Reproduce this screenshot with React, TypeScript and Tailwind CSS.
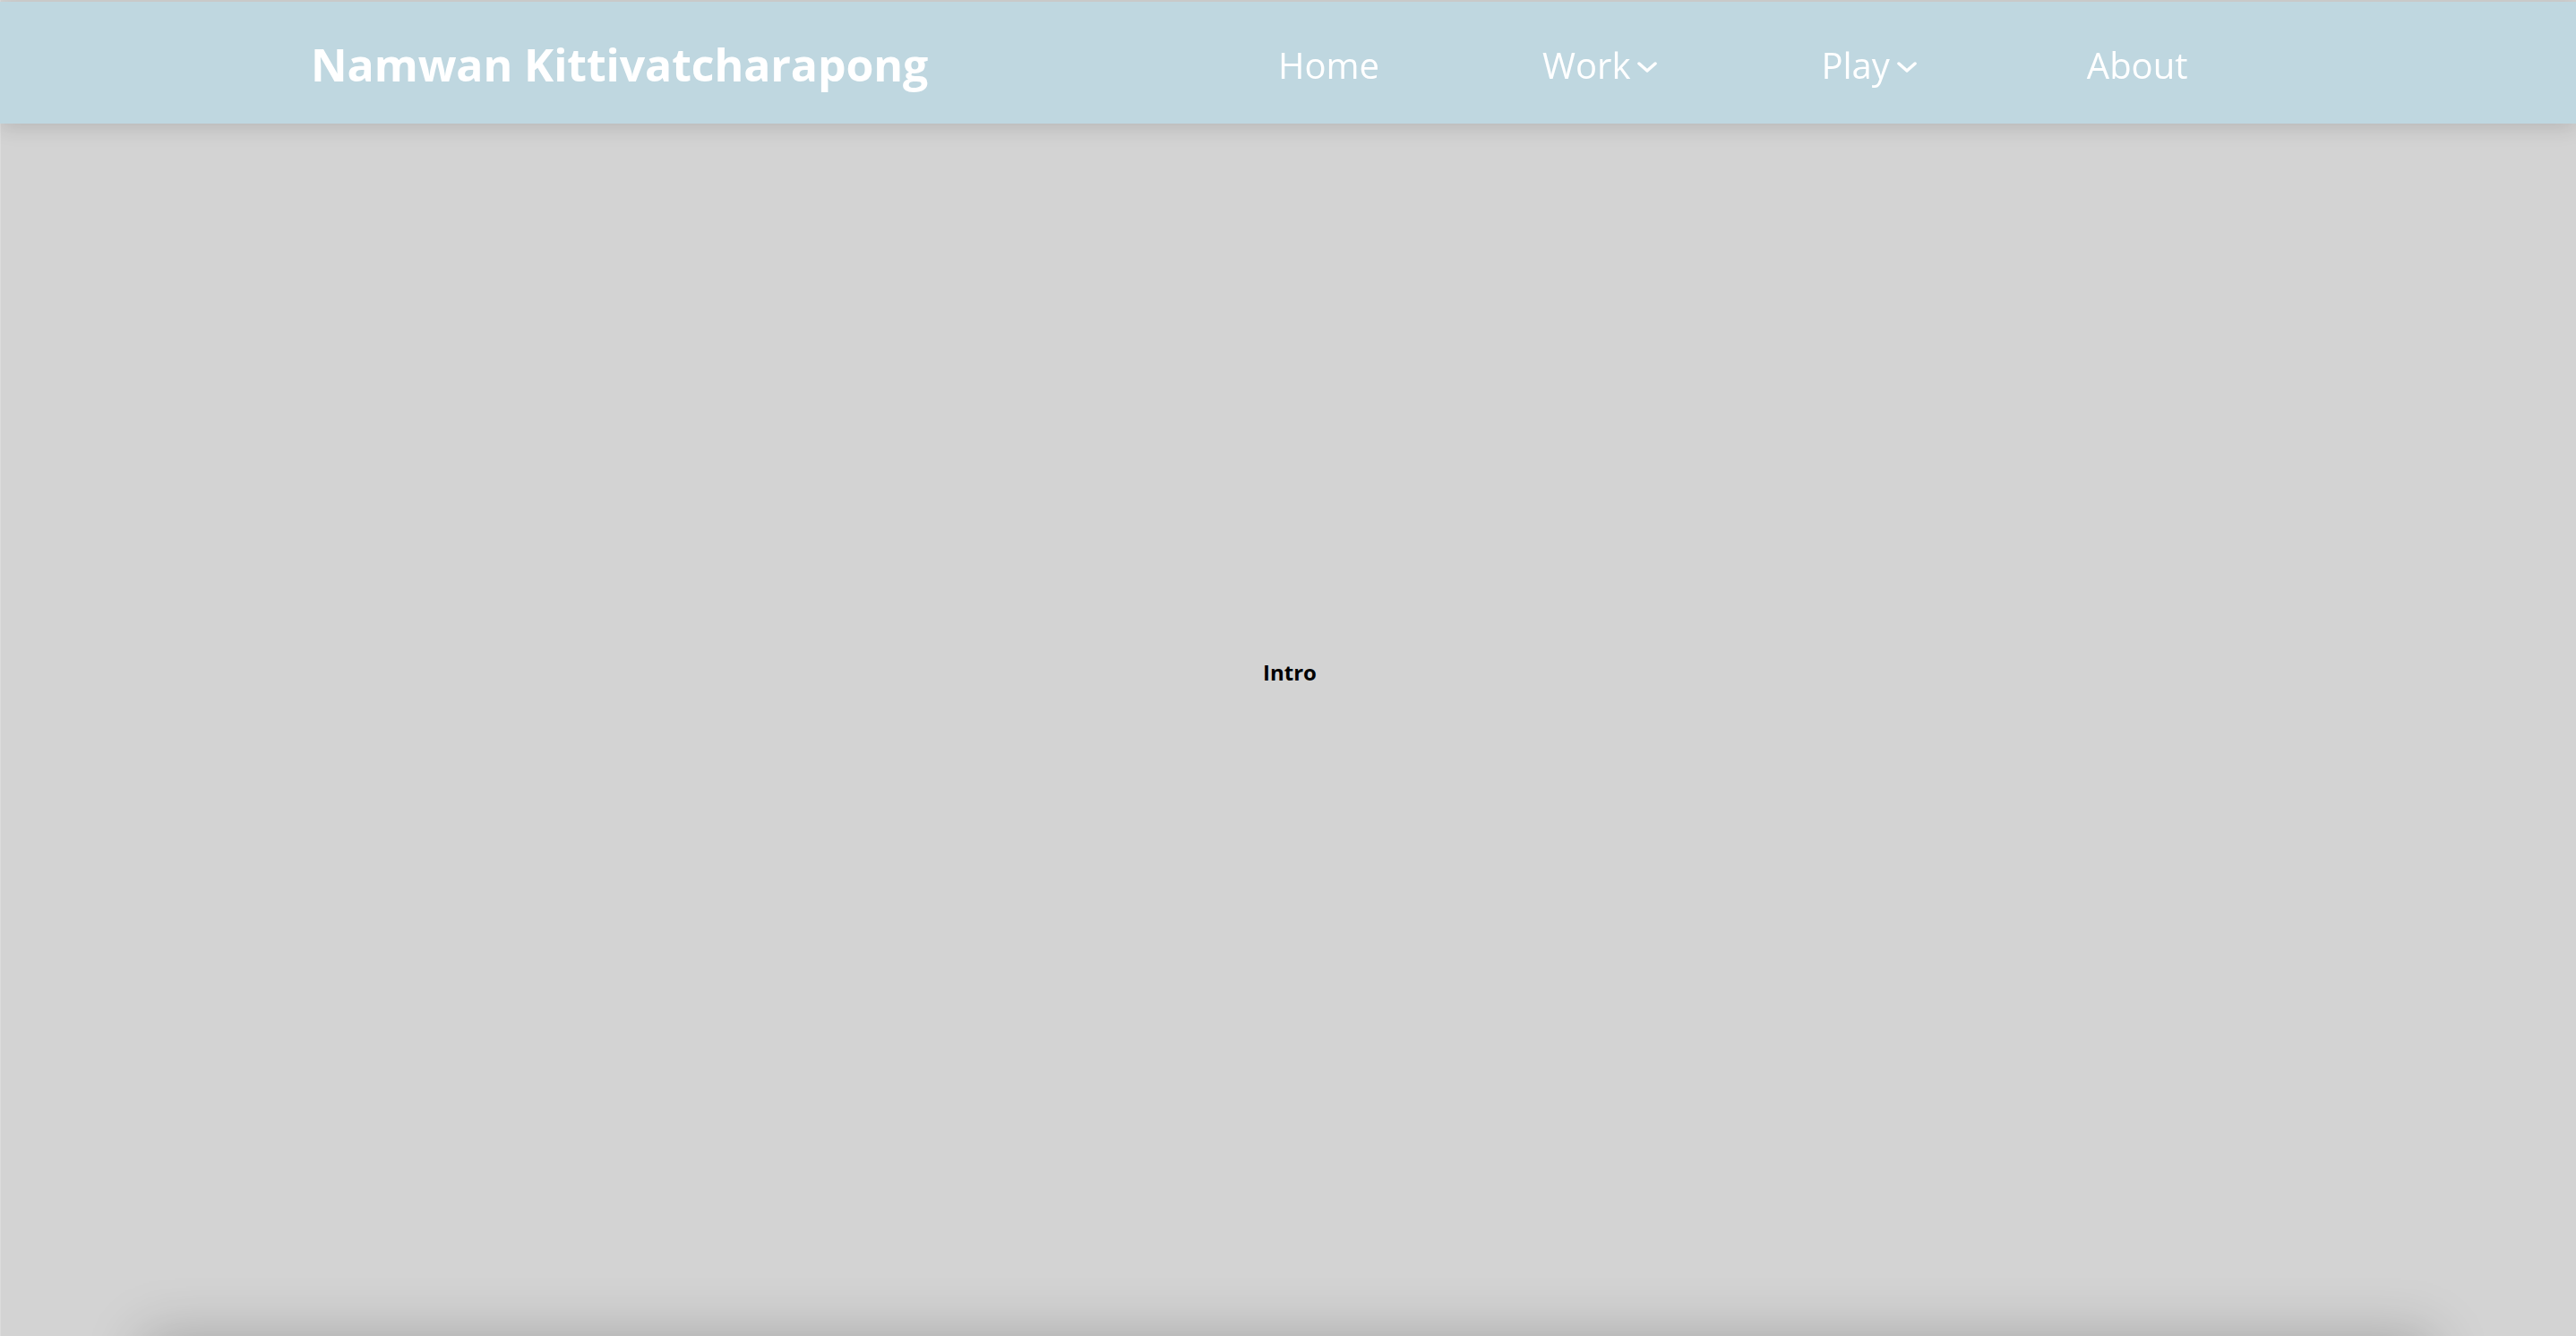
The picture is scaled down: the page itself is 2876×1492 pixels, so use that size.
import { ReactNode } from 'react';

function Chevron() {
  return (
    <svg width="22" height="12" viewBox="0 0 22 12" fill="none" className="ml-[8px] mt-[4px]">
      <path d="M2 2 L11 10 L20 2" stroke="white" strokeWidth="3.5" strokeLinecap="round" strokeLinejoin="round" />
    </svg>
  );
}

function NavItem({ children, dropdown, className = '' }: { children: ReactNode; dropdown?: boolean; className?: string }) {
  return (
    <button className={`flex items-center text-white text-[40px] font-normal leading-none cursor-pointer ${className}`}>
      <span>{children}</span>
      {dropdown && <Chevron />}
    </button>
  );
}

export default function App() {
  return (
    <div className="min-h-screen bg-[#d3d3d3] font-['Open_Sans',sans-serif]">
      {/* Header */}
      <header className="fixed top-[2px] left-0 right-0 z-50 h-[136px] bg-[#bfd7e0] shadow-[0_4px_22px_rgba(0,0,0,0.14)]">
        <div className="flex items-center h-full pl-[347px]">
          <div className="w-[1080px] text-white text-[50px] font-bold leading-none pt-[4px] tracking-[-0.1px]">
            Namwan Kittivatcharapong
          </div>
          <nav className="flex items-center pt-[5px]">
            <NavItem>Home</NavItem>
            <NavItem dropdown className="ml-[182px]">Work</NavItem>
            <NavItem dropdown className="ml-[183px]">Play</NavItem>
            <NavItem className="ml-[190px]">About</NavItem>
          </nav>
        </div>
      </header>

      {/* Intro */}
      <section className="h-[1492px] flex items-center justify-center border-l border-[#dcdcdc]">
        <h2 className="text-[24px] font-bold text-black leading-none mt-[10px] ml-[3px]">Intro</h2>
      </section>

      {/* Next section */}
      <section className="mx-[160px] h-[900px] bg-[#d3d3d3] shadow-[0_0_60px_rgba(0,0,0,0.22)]" />
    </div>
  );
}
